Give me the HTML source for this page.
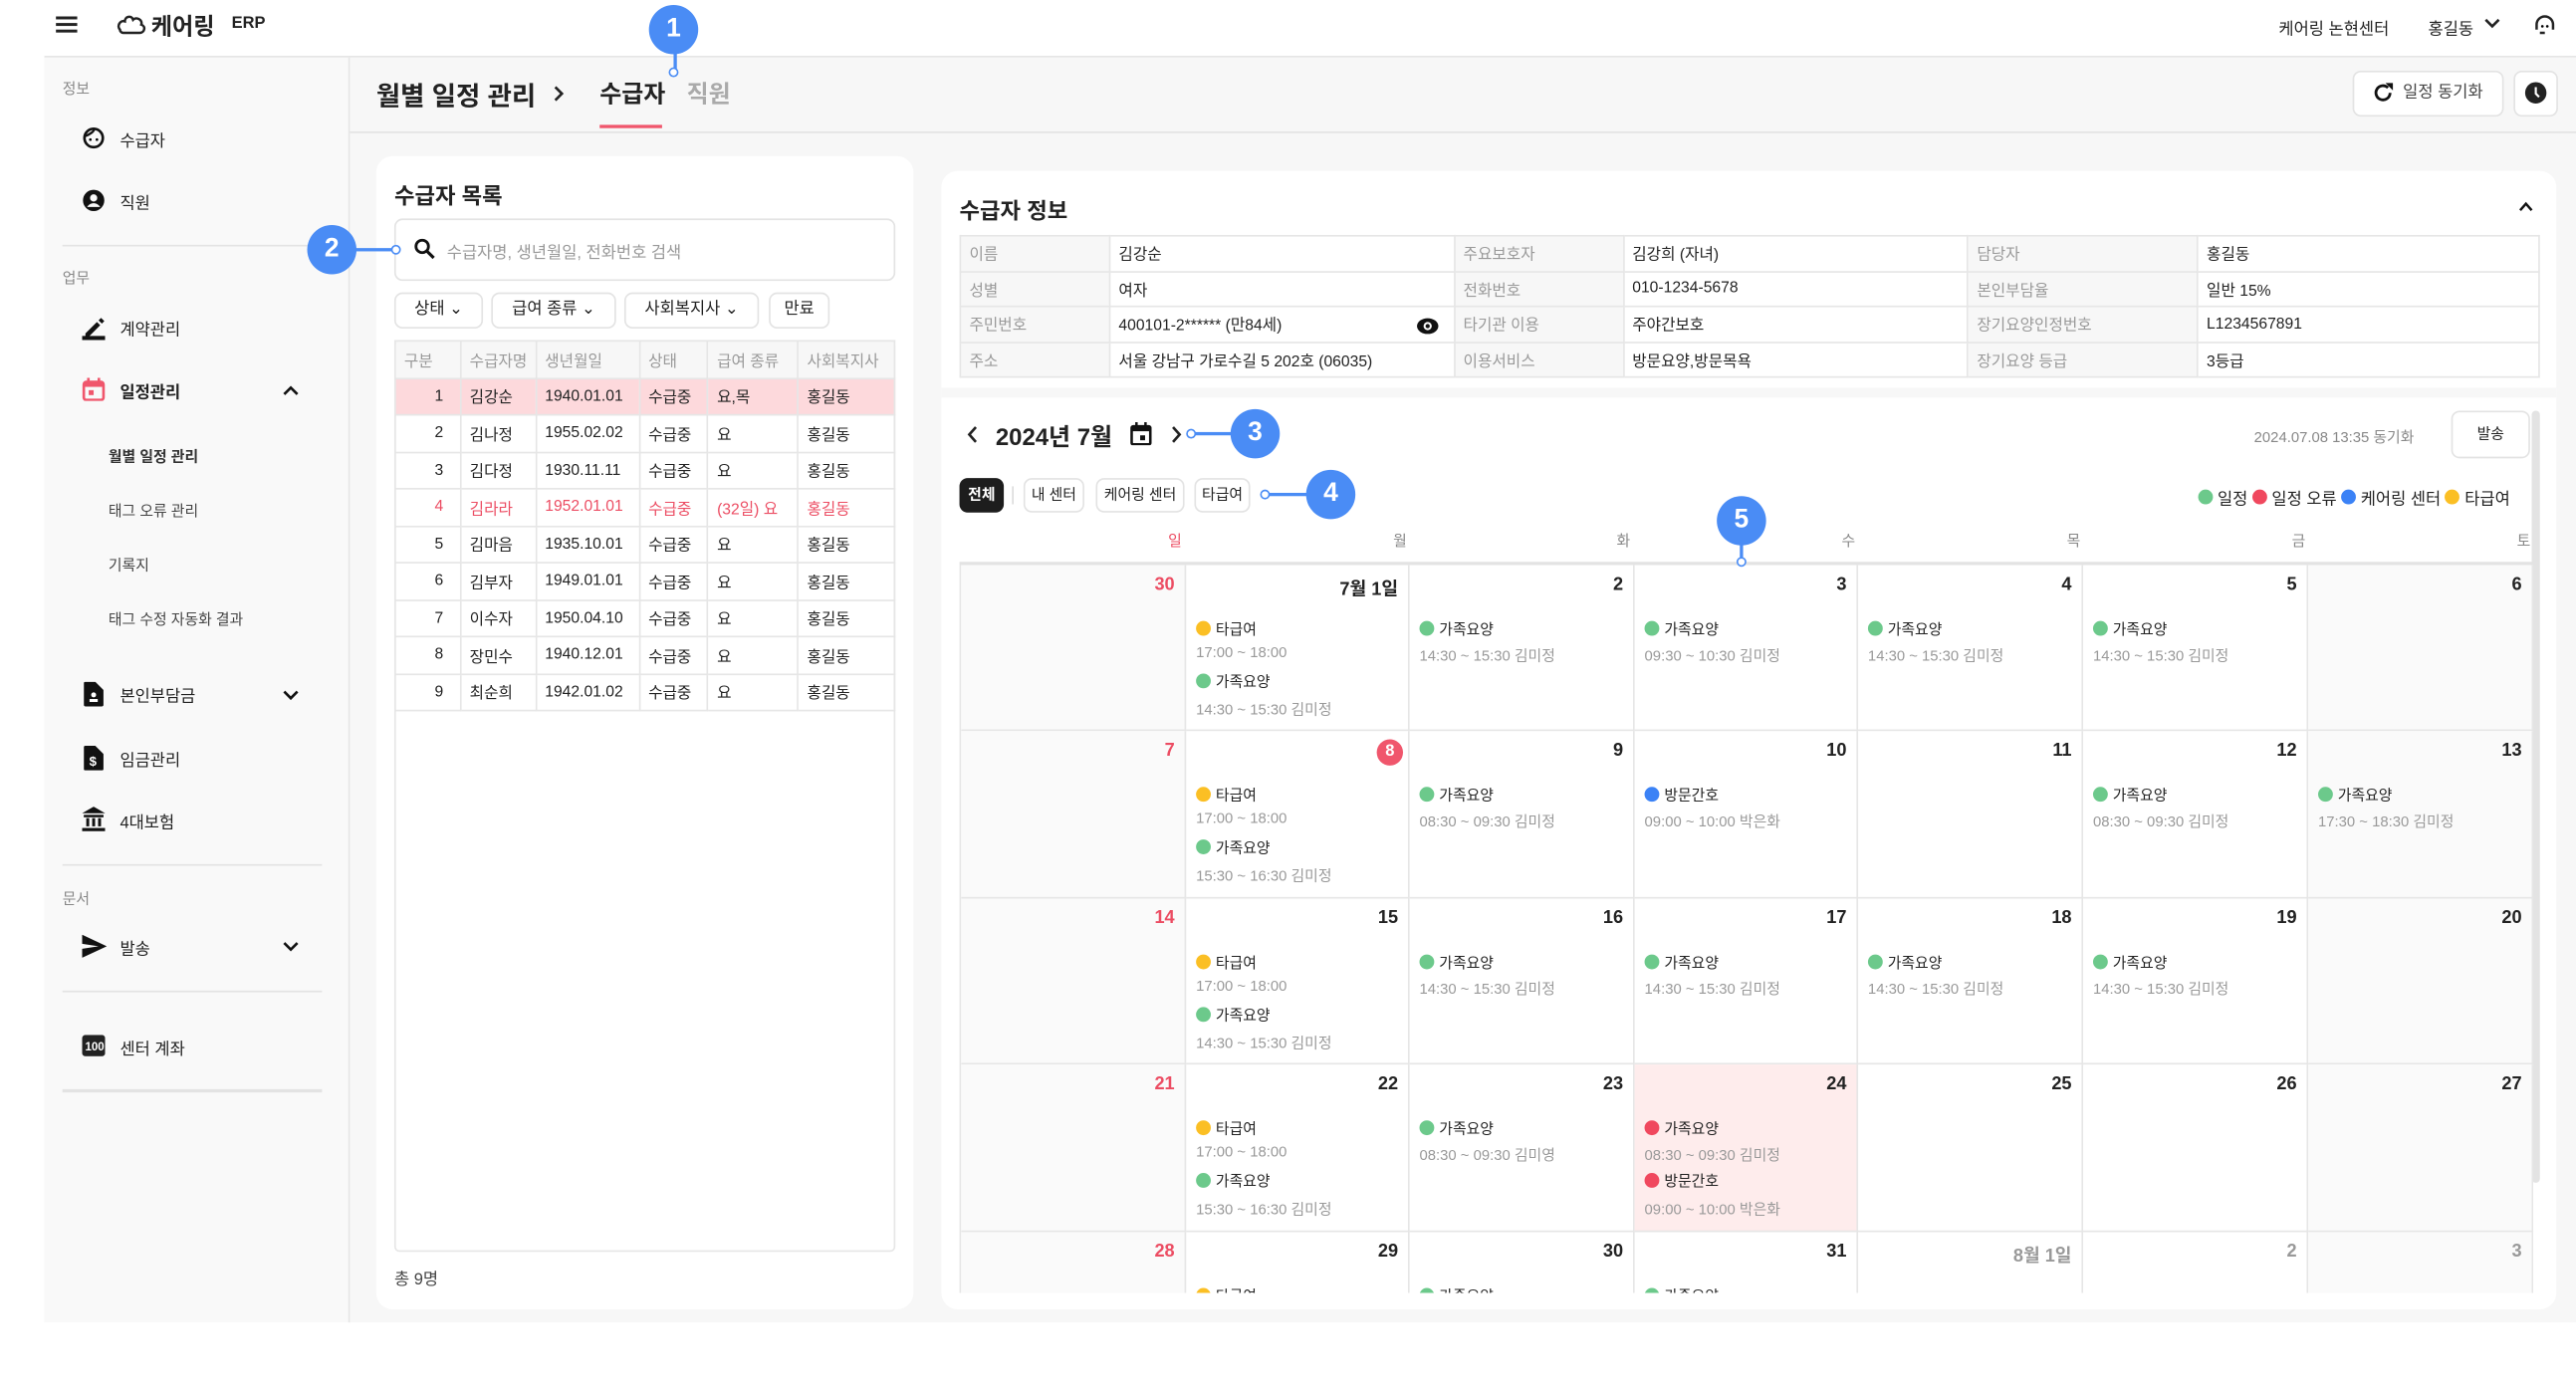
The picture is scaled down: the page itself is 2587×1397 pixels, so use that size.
<!DOCTYPE html>
<html><head><meta charset="utf-8">
<style>
html,body{margin:0;padding:0;width:2587px;height:1397px;overflow:hidden;background:#fff}
#w{position:absolute;left:0;top:0;width:1568px;height:847px;transform:scale(1.6499);transform-origin:0 0;font-family:"Liberation Sans","Noto Sans CJK KR",sans-serif;color:#222}
.a{position:absolute;white-space:nowrap}
.g{color:#888}
.s9{font-size:9px}.s10{font-size:10px}.s11{font-size:11px}
.b{font-weight:bold}
.badge{position:absolute;width:30px;height:30px;border-radius:50%;background:#4a8cf5;color:#fff;font-weight:bold;font-size:16px;text-align:center;line-height:30px;font-family:"Liberation Sans",sans-serif}
.ring{position:absolute;width:4px;height:4px;border:1.5px solid #4a8cf5;border-radius:50%;background:#fff}
.ln{position:absolute;background:#4a8cf5}
.btn{position:absolute;border:1px solid #e3e3e3;border-radius:5px;background:#fff;font-size:10px;text-align:center;box-sizing:border-box}
table{border-collapse:collapse;position:absolute}
td{border:1px solid #e6e6e6;padding:0 0 0 5px;font-size:9.5px;height:21.5px;box-sizing:border-box}
#lt td{height:22.5px}
.cell{position:absolute;border-right:1px solid #e6e6e6;border-bottom:1px solid #e6e6e6;box-sizing:border-box;overflow:hidden}
.dn{position:absolute;right:6px;top:6px;font-size:11px;font-weight:bold}
.ev{position:absolute;left:6px;font-size:9px;white-space:nowrap}
.ev i{display:inline-block;width:9px;height:9px;border-radius:50%;margin-right:3px;vertical-align:-1px}
.tm{position:absolute;left:6px;font-size:9px;color:#999;white-space:nowrap}
.G{background:#6cc98b}.Y{background:#fbbf24}.B{background:#3b82f6}.R{background:#f0485e}
.red{color:#ec4d63}
</style></head><body><div id="w">
<div class="a" style="left:27px;top:0;width:1541px;height:34px;border-bottom:1px solid #e3e3e3;background:#fff"></div>
<svg class="a" style="left:34px;top:9px" width="14" height="12"><rect y="1" width="13" height="1.8" fill="#222"/><rect y="5" width="13" height="1.8" fill="#222"/><rect y="9" width="13" height="1.8" fill="#222"/></svg>
<svg class="a" style="left:70px;top:7px" width="20" height="16" viewBox="0 0 20 16"><path d="M3 11c-2-2 0-6 3-5 0-3 4-4 5-1 2-2 6 0 5 3 3 1 2 5-1 5H5c-1 0-2-1-2-2z" fill="none" stroke="#222" stroke-width="1.5"/></svg>
<div class="a b" style="left:92px;top:6px;font-size:14px">케어링</div>
<div class="a b" style="left:141px;top:9px;font-size:10px">ERP</div>
<div class="a s10" style="left:1387px;top:9px">케어링 논현센터</div>
<div class="a s10" style="left:1478px;top:9px">홍길동</div>
<svg class="a" style="left:1512px;top:10px" width="10" height="8"><path d="M1 2l4 4 4-4" fill="none" stroke="#222" stroke-width="1.6"/></svg>
<svg class="a" style="left:1542px;top:8px" width="14" height="14" viewBox="0 0 14 14"><path d="M2 10V7a5 5 0 0110 0v3M4 12h3" fill="none" stroke="#222" stroke-width="1.5"/><circle cx="5.5" cy="8" r=".8"/><circle cx="8.5" cy="8" r=".8"/></svg>
<div class="a" style="left:27px;top:35px;width:185px;height:770px;background:#f9f9f9;border-right:1px solid #e6e6e6"></div>
<div class="a s9 g" style="left:38px;top:47px">정보</div>
<svg class="a" style="left:50px;top:77px" width="14" height="14"><circle cx="7" cy="7" r="5.6" fill="none" stroke="#111" stroke-width="1.6"/><path d="M1.5 6c3-1 6-3 6-5" stroke="#111" stroke-width="1.4" fill="none"/><circle cx="5" cy="8" r=".8"/><circle cx="9" cy="8" r=".8"/></svg>
<div class="a s10" style="left:73px;top:77px">수급자</div>
<svg class="a" style="left:50px;top:115px" width="14" height="14"><circle cx="7" cy="7" r="6.5" fill="#111"/><circle cx="7" cy="5.5" r="2.2" fill="#f9f9f9"/><path d="M3 11c2-3 6-3 8 0" fill="#f9f9f9"/></svg>
<div class="a s10" style="left:73px;top:115px">직원</div>
<div class="a" style="left:38px;top:149px;width:158px;height:1px;background:#e3e3e3"></div>
<div class="a s9 g" style="left:38px;top:162px">업무</div>
<svg class="a" style="left:50px;top:192px" width="14" height="15"><path d="M2 11l7-7 2 2-7 7H2z" fill="#111"/><path d="M10 3l1.5-1.5 2 2L12 5z" fill="#111"/><rect y="12.5" width="14" height="2.5" fill="#111"/></svg>
<div class="a s10" style="left:73px;top:192px">계약관리</div>
<svg class="a" style="left:50px;top:230px" width="14" height="14"><rect x="1" y="2.5" width="12" height="11" rx="1.5" fill="none" stroke="#f0566c" stroke-width="1.6"/><rect x="1" y="2.5" width="12" height="3" fill="#f0566c"/><rect x="3" y="0" width="1.6" height="3" fill="#f0566c"/><rect x="9.4" y="0" width="1.6" height="3" fill="#f0566c"/><rect x="4" y="7.5" width="3" height="3" fill="#f0566c"/></svg>
<div class="a s10 b" style="left:73px;top:230px">일정관리</div>
<svg class="a" style="left:172px;top:234px" width="10" height="7"><path d="M1 6l4-4 4 4" fill="none" stroke="#111" stroke-width="1.6"/></svg>
<div class="a s9 b" style="left:66px;top:271px;color:#333">월별 일정 관리</div>
<div class="a s9" style="left:66px;top:304px;color:#444">태그 오류 관리</div>
<div class="a s9" style="left:66px;top:337px;color:#444">기록지</div>
<div class="a s9" style="left:66px;top:370px;color:#444">태그 수정 자동화 결과</div>
<svg class="a" style="left:51px;top:415px" width="12" height="15"><path d="M0 1a1 1 0 011-1h6l5 5v9a1 1 0 01-1 1H1a1 1 0 01-1-1z" fill="#111"/><circle cx="6" cy="8" r="1.5" fill="#fff"/><rect x="3.5" y="10.5" width="5" height="1.8" fill="#fff"/></svg>
<div class="a s10" style="left:73px;top:415px">본인부담금</div>
<svg class="a" style="left:172px;top:420px" width="10" height="7"><path d="M1 1l4 4 4-4" fill="none" stroke="#111" stroke-width="1.6"/></svg>
<svg class="a" style="left:51px;top:454px" width="12" height="15"><path d="M0 1a1 1 0 011-1h6l5 5v9a1 1 0 01-1 1H1a1 1 0 01-1-1z" fill="#111"/><text x="3.3" y="12" font-size="8" fill="#fff" font-family="Liberation Sans" font-weight="bold">$</text></svg>
<div class="a s10" style="left:73px;top:454px">임금관리</div>
<svg class="a" style="left:50px;top:491px" width="14" height="15"><path d="M7 0l7 4H0z" fill="#111"/><rect x="1" y="5" width="12" height="1.5" fill="#111"/><rect x="2.5" y="7" width="1.8" height="5" fill="#111"/><rect x="6.1" y="7" width="1.8" height="5" fill="#111"/><rect x="9.7" y="7" width="1.8" height="5" fill="#111"/><rect y="13" width="14" height="2" fill="#111"/></svg>
<div class="a s10" style="left:73px;top:492px">4대보험</div>
<div class="a" style="left:38px;top:526px;width:158px;height:1px;background:#e3e3e3"></div>
<div class="a s9 g" style="left:38px;top:540px">문서</div>
<svg class="a" style="left:50px;top:569px" width="15" height="14"><path d="M0 0l15 7-15 7 0-5.5 10-1.5-10-1.5z" fill="#111"/></svg>
<div class="a s10" style="left:73px;top:569px">발송</div>
<svg class="a" style="left:172px;top:573px" width="10" height="7"><path d="M1 1l4 4 4-4" fill="none" stroke="#111" stroke-width="1.6"/></svg>
<div class="a" style="left:38px;top:603px;width:158px;height:1px;background:#e3e3e3"></div>
<svg class="a" style="left:50px;top:630px" width="14" height="13"><rect width="14" height="13" rx="2" fill="#222"/><text x="1.8" y="9.5" font-size="7" fill="#fff" font-family="Liberation Sans" font-weight="bold">100</text></svg>
<div class="a s10" style="left:73px;top:630px">센터 계좌</div>
<div class="a" style="left:38px;top:663px;width:158px;height:2px;background:#e3e3e3"></div>
<div class="a" style="left:213px;top:35px;width:1355px;height:770px;background:#f7f7f7"></div>
<div class="a" style="left:213px;top:80px;width:1355px;height:1px;background:#e3e3e3"></div>
<div class="a b" style="left:229px;top:45px;font-size:16px">월별 일정 관리</div>
<svg class="a" style="left:336px;top:52px" width="8" height="10"><path d="M2 1l4 4-4 4" fill="none" stroke="#222" stroke-width="1.6"/></svg>
<div class="a b" style="left:365px;top:46px;font-size:14.5px">수급자</div>
<div class="a" style="left:365px;top:76px;width:38px;height:1.5px;background:#f0566c"></div>
<div class="a b" style="left:418px;top:46px;font-size:14.5px;color:#aaa">직원</div>
<div class="btn" style="left:1432px;top:43px;width:92px;height:28px;line-height:26px;color:#444;padding-left:18px">일정 동기화</div>
<svg class="a" style="left:1444px;top:50px" width="13" height="13"><path d="M10.8 6.5A4.3 4.3 0 1 1 9.5 3.4" fill="none" stroke="#111" stroke-width="1.7"/><path d="M8 0.5h4.5V5z" fill="#111"/></svg>
<div class="btn" style="left:1530px;top:43px;width:27px;height:28px"></div>
<svg class="a" style="left:1536px;top:49px" width="15" height="15"><circle cx="7.5" cy="7.5" r="6.5" fill="#222"/><path d="M7.5 4v4l2 2" stroke="#fff" stroke-width="1.3" fill="none"/></svg>
<div class="a" style="left:229px;top:95px;width:327px;height:702px;background:#fff;border-radius:10px"></div>
<div class="a b" style="left:240px;top:108px;font-size:13.5px">수급자 목록</div>
<div class="a" style="left:240px;top:133px;width:305px;height:38px;border:1px solid #e3e3e3;border-radius:5px;box-sizing:border-box"></div>
<svg class="a" style="left:252px;top:145px" width="13" height="13"><circle cx="5" cy="5" r="3.8" fill="none" stroke="#111" stroke-width="1.7"/><path d="M8 8l4 4" stroke="#111" stroke-width="1.9"/></svg>
<div class="a s10" style="left:272px;top:145px;color:#999">수급자명, 생년월일, 전화번호 검색</div>
<div class="btn" style="left:240px;top:178px;width:54px;height:22px;line-height:20px">상태 ⌄</div>
<div class="btn" style="left:299px;top:178px;width:76px;height:22px;line-height:20px">급여 종류 ⌄</div>
<div class="btn" style="left:380px;top:178px;width:82px;height:22px;line-height:20px">사회복지사 ⌄</div>
<div class="btn" style="left:468px;top:178px;width:37px;height:22px;line-height:20px">만료</div>
<div class="a" style="left:240px;top:207px;width:305px;height:555px;border:1px solid #e6e6e6;box-sizing:border-box;border-radius:3px"></div>
<table id="lt" style="left:240px;top:207px;width:305px">
<colgroup><col style="width:40px"><col style="width:46px"><col style="width:63px"><col style="width:42px"><col style="width:55px"><col style="width:59px"></colgroup>
<tr style="background:#f7f7f7;color:#999"><td style="height:21px">구분</td><td>수급자명</td><td>생년월일</td><td>상태</td><td>급여 종류</td><td>사회복지사</td></tr>
<tr style="background:#fdd9dc"><td style="text-align:right;padding-right:10px">1</td><td>김강순</td><td>1940.01.01</td><td>수급중</td><td>요,목</td><td>홍길동</td></tr>
<tr><td style="text-align:right;padding-right:10px">2</td><td>김나정</td><td>1955.02.02</td><td>수급중</td><td>요</td><td>홍길동</td></tr>
<tr><td style="text-align:right;padding-right:10px">3</td><td>김다정</td><td>1930.11.11</td><td>수급중</td><td>요</td><td>홍길동</td></tr>
<tr class="red"><td style="text-align:right;padding-right:10px">4</td><td>김라라</td><td>1952.01.01</td><td>수급중</td><td>(32일) 요</td><td>홍길동</td></tr>
<tr><td style="text-align:right;padding-right:10px">5</td><td>김마음</td><td>1935.10.01</td><td>수급중</td><td>요</td><td>홍길동</td></tr>
<tr><td style="text-align:right;padding-right:10px">6</td><td>김부자</td><td>1949.01.01</td><td>수급중</td><td>요</td><td>홍길동</td></tr>
<tr><td style="text-align:right;padding-right:10px">7</td><td>이수자</td><td>1950.04.10</td><td>수급중</td><td>요</td><td>홍길동</td></tr>
<tr><td style="text-align:right;padding-right:10px">8</td><td>장민수</td><td>1940.12.01</td><td>수급중</td><td>요</td><td>홍길동</td></tr>
<tr><td style="text-align:right;padding-right:10px">9</td><td>최순희</td><td>1942.01.02</td><td>수급중</td><td>요</td><td>홍길동</td></tr>
</table>
<div class="a s10" style="left:240px;top:770px;color:#444">총 9명</div>
<div class="a" style="left:573px;top:104px;width:983px;height:693px;background:#fff;border-radius:10px"></div>
<div class="a b" style="left:584px;top:117px;font-size:13.5px">수급자 정보</div>
<svg class="a" style="left:1533px;top:122px" width="9" height="7"><path d="M1 6l3.5-4 3.5 4" fill="none" stroke="#111" stroke-width="1.5"/></svg>
<table style="left:584px;top:143px;width:962px">
<colgroup><col style="width:91px"><col style="width:210px"><col style="width:103px"><col style="width:210px"><col style="width:140px"><col style="width:208px"></colgroup>
<tr><td style="background:#f7f7f7;color:#999">이름</td><td>김강순</td><td style="background:#f7f7f7;color:#999">주요보호자</td><td>김강희 (자녀)</td><td style="background:#f7f7f7;color:#999">담당자</td><td>홍길동</td></tr>
<tr><td style="background:#f7f7f7;color:#999">성별</td><td>여자</td><td style="background:#f7f7f7;color:#999">전화번호</td><td>010-1234-5678</td><td style="background:#f7f7f7;color:#999">본인부담율</td><td>일반 15%</td></tr>
<tr><td style="background:#f7f7f7;color:#999">주민번호</td><td>400101-2****** (만84세)</td><td style="background:#f7f7f7;color:#999">타기관 이용</td><td>주야간보호</td><td style="background:#f7f7f7;color:#999">장기요양인정번호</td><td>L1234567891</td></tr>
<tr><td style="background:#f7f7f7;color:#999">주소</td><td>서울 강남구 가로수길 5 202호 (06035)</td><td style="background:#f7f7f7;color:#999">이용서비스</td><td>방문요양,방문목욕</td><td style="background:#f7f7f7;color:#999">장기요양 등급</td><td>3등급</td></tr>
</table>
<svg class="a" style="left:862px;top:193px" width="14" height="11"><ellipse cx="7" cy="5.5" rx="6.5" ry="4.8" fill="#111"/><circle cx="7" cy="5.5" r="2.5" fill="#fff"/><circle cx="7" cy="5.5" r="1.3" fill="#111"/></svg>
<div class="a" style="left:573px;top:236px;width:983px;height:6px;background:#f7f7f7"></div>
<div class="a" style="left:1541px;top:250px;width:5px;height:470px;background:#e3e3e3;border-radius:3px"></div>
<svg class="a" style="left:588px;top:259px" width="8" height="11"><path d="M6 1L2 5.5 6 10" fill="none" stroke="#222" stroke-width="1.6"/></svg>
<div class="a b" style="left:606px;top:255px;font-size:14.5px">2024년 7월</div>
<svg class="a" style="left:688px;top:257px" width="13" height="14"><rect x=".8" y="2.5" width="11.4" height="11" rx="1" fill="none" stroke="#111" stroke-width="1.6"/><rect x=".8" y="2.5" width="11.4" height="3" fill="#111"/><rect x="3" y="0" width="1.5" height="3" fill="#111"/><rect x="8.5" y="0" width="1.5" height="3" fill="#111"/><rect x="6" y="8" width="3" height="3" fill="#111"/></svg>
<svg class="a" style="left:712px;top:259px" width="8" height="11"><path d="M2 1l4 4.5L2 10" fill="none" stroke="#222" stroke-width="1.6"/></svg>
<div class="a s9 g" style="left:1372px;top:259px">2024.07.08 13:35 동기화</div>
<div class="btn" style="left:1492px;top:250px;width:48px;height:29px;line-height:27px;font-size:9px">발송</div>
<div class="btn" style="left:584px;top:291px;width:27px;height:21px;line-height:21px;background:#1d1d1d;color:#fff;border:none;font-size:9px;font-weight:bold">전체</div>
<div class="a" style="left:616px;top:296px;width:1px;height:11px;background:#ddd"></div>
<div class="btn" style="left:623px;top:291px;width:37px;height:21px;line-height:19px;font-size:9px">내 센터</div>
<div class="btn" style="left:667px;top:291px;width:54px;height:21px;line-height:19px;font-size:9px">케어링 센터</div>
<div class="btn" style="left:727px;top:291px;width:34px;height:21px;line-height:19px;font-size:9px">타급여</div>
<div class="a s10" style="left:1338px;top:295px"><span style="display:inline-block;width:9px;height:9px;border-radius:50%;background:#6cc98b"></span> 일정 <span style="display:inline-block;width:9px;height:9px;border-radius:50%;background:#f0485e"></span> 일정 오류 <span style="display:inline-block;width:9px;height:9px;border-radius:50%;background:#3b82f6"></span> 케어링 센터 <span style="display:inline-block;width:9px;height:9px;border-radius:50%;background:#fbbf24"></span> 타급여</div>
<div class="a s9 red" style="left:711px;top:322px">일</div>
<div class="a s9 g" style="left:848px;top:322px">월</div>
<div class="a s9 g" style="left:984px;top:322px">화</div>
<div class="a s9 g" style="left:1121px;top:322px">수</div>
<div class="a s9 g" style="left:1258px;top:322px">목</div>
<div class="a s9 g" style="left:1395px;top:322px">금</div>
<div class="a s9 g" style="left:1532px;top:322px">토</div>
<div class="a" style="left:584px;top:342px;width:957px;height:2px;background:#e3e3e3"></div>
<div class="a" style="left:584px;top:344px;width:957px;height:443px;overflow:hidden;border-left:1px solid #e6e6e6">
<div class="cell" style="left:0;top:0;width:137px;height:101px;background:#fafafa"><div class="dn red">30</div></div>
<div class="cell" style="left:137px;top:0;width:136px;height:101px"><div class="dn">7월 1일</div><div class="ev" style="top:32px"><i class="Y"></i>타급여</div><div class="tm" style="top:48px">17:00 ~ 18:00</div><div class="ev" style="top:64px"><i class="G"></i>가족요양</div><div class="tm" style="top:81px">14:30 ~ 15:30 김미정</div></div>
<div class="cell" style="left:273px;top:0;width:137px;height:101px"><div class="dn">2</div><div class="ev" style="top:32px"><i class="G"></i>가족요양</div><div class="tm" style="top:48px">14:30 ~ 15:30 김미정</div></div>
<div class="cell" style="left:410px;top:0;width:136px;height:101px"><div class="dn">3</div><div class="ev" style="top:32px"><i class="G"></i>가족요양</div><div class="tm" style="top:48px">09:30 ~ 10:30 김미정</div></div>
<div class="cell" style="left:546px;top:0;width:137px;height:101px"><div class="dn">4</div><div class="ev" style="top:32px"><i class="G"></i>가족요양</div><div class="tm" style="top:48px">14:30 ~ 15:30 김미정</div></div>
<div class="cell" style="left:683px;top:0;width:137px;height:101px"><div class="dn">5</div><div class="ev" style="top:32px"><i class="G"></i>가족요양</div><div class="tm" style="top:48px">14:30 ~ 15:30 김미정</div></div>
<div class="cell" style="left:820px;top:0;width:137px;height:101px;background:#fafafa"><div class="dn">6</div></div>
<div class="cell" style="left:0;top:101px;width:137px;height:102px;background:#fafafa"><div class="dn red">7</div></div>
<div class="cell" style="left:137px;top:101px;width:136px;height:102px"><div class="dn" style="top:5px;right:3px;width:16px;height:16px;border-radius:50%;background:#f0566c;color:#fff;text-align:center;line-height:16px;font-size:10px">8</div><div class="ev" style="top:32px"><i class="Y"></i>타급여</div><div class="tm" style="top:48px">17:00 ~ 18:00</div><div class="ev" style="top:64px"><i class="G"></i>가족요양</div><div class="tm" style="top:81px">15:30 ~ 16:30 김미정</div></div>
<div class="cell" style="left:273px;top:101px;width:137px;height:102px"><div class="dn">9</div><div class="ev" style="top:32px"><i class="G"></i>가족요양</div><div class="tm" style="top:48px">08:30 ~ 09:30 김미정</div></div>
<div class="cell" style="left:410px;top:101px;width:136px;height:102px"><div class="dn">10</div><div class="ev" style="top:32px"><i class="B"></i>방문간호</div><div class="tm" style="top:48px">09:00 ~ 10:00 박은화</div></div>
<div class="cell" style="left:546px;top:101px;width:137px;height:102px"><div class="dn">11</div></div>
<div class="cell" style="left:683px;top:101px;width:137px;height:102px"><div class="dn">12</div><div class="ev" style="top:32px"><i class="G"></i>가족요양</div><div class="tm" style="top:48px">08:30 ~ 09:30 김미정</div></div>
<div class="cell" style="left:820px;top:101px;width:137px;height:102px;background:#fafafa"><div class="dn">13</div><div class="ev" style="top:32px"><i class="G"></i>가족요양</div><div class="tm" style="top:48px">17:30 ~ 18:30 김미정</div></div>
<div class="cell" style="left:0;top:203px;width:137px;height:101px;background:#fafafa"><div class="dn red">14</div></div>
<div class="cell" style="left:137px;top:203px;width:136px;height:101px"><div class="dn">15</div><div class="ev" style="top:32px"><i class="Y"></i>타급여</div><div class="tm" style="top:48px">17:00 ~ 18:00</div><div class="ev" style="top:64px"><i class="G"></i>가족요양</div><div class="tm" style="top:81px">14:30 ~ 15:30 김미정</div></div>
<div class="cell" style="left:273px;top:203px;width:137px;height:101px"><div class="dn">16</div><div class="ev" style="top:32px"><i class="G"></i>가족요양</div><div class="tm" style="top:48px">14:30 ~ 15:30 김미정</div></div>
<div class="cell" style="left:410px;top:203px;width:136px;height:101px"><div class="dn">17</div><div class="ev" style="top:32px"><i class="G"></i>가족요양</div><div class="tm" style="top:48px">14:30 ~ 15:30 김미정</div></div>
<div class="cell" style="left:546px;top:203px;width:137px;height:101px"><div class="dn">18</div><div class="ev" style="top:32px"><i class="G"></i>가족요양</div><div class="tm" style="top:48px">14:30 ~ 15:30 김미정</div></div>
<div class="cell" style="left:683px;top:203px;width:137px;height:101px"><div class="dn">19</div><div class="ev" style="top:32px"><i class="G"></i>가족요양</div><div class="tm" style="top:48px">14:30 ~ 15:30 김미정</div></div>
<div class="cell" style="left:820px;top:203px;width:137px;height:101px;background:#fafafa"><div class="dn">20</div></div>
<div class="cell" style="left:0;top:304px;width:137px;height:102px;background:#fafafa"><div class="dn red">21</div></div>
<div class="cell" style="left:137px;top:304px;width:136px;height:102px"><div class="dn">22</div><div class="ev" style="top:32px"><i class="Y"></i>타급여</div><div class="tm" style="top:48px">17:00 ~ 18:00</div><div class="ev" style="top:64px"><i class="G"></i>가족요양</div><div class="tm" style="top:81px">15:30 ~ 16:30 김미정</div></div>
<div class="cell" style="left:273px;top:304px;width:137px;height:102px"><div class="dn">23</div><div class="ev" style="top:32px"><i class="G"></i>가족요양</div><div class="tm" style="top:48px">08:30 ~ 09:30 김미영</div></div>
<div class="cell" style="left:410px;top:304px;width:136px;height:102px;background:#feecec"><div class="dn">24</div><div class="ev" style="top:32px"><i class="R"></i>가족요양</div><div class="tm" style="top:48px">08:30 ~ 09:30 김미정</div><div class="ev" style="top:64px"><i class="R"></i>방문간호</div><div class="tm" style="top:81px">09:00 ~ 10:00 박은화</div></div>
<div class="cell" style="left:546px;top:304px;width:137px;height:102px"><div class="dn">25</div></div>
<div class="cell" style="left:683px;top:304px;width:137px;height:102px"><div class="dn">26</div></div>
<div class="cell" style="left:820px;top:304px;width:137px;height:102px;background:#fafafa"><div class="dn">27</div></div>
<div class="cell" style="left:0;top:406px;width:137px;height:101px;background:#fafafa"><div class="dn red">28</div></div>
<div class="cell" style="left:137px;top:406px;width:136px;height:101px"><div class="dn">29</div><div class="ev" style="top:32px"><i class="Y"></i>타급여</div></div>
<div class="cell" style="left:273px;top:406px;width:137px;height:101px"><div class="dn">30</div><div class="ev" style="top:32px"><i class="G"></i>가족요양</div></div>
<div class="cell" style="left:410px;top:406px;width:136px;height:101px"><div class="dn">31</div><div class="ev" style="top:32px"><i class="G"></i>가족요양</div></div>
<div class="cell" style="left:546px;top:406px;width:137px;height:101px"><div class="dn" style="color:#999">8월 1일</div></div>
<div class="cell" style="left:683px;top:406px;width:137px;height:101px"><div class="dn" style="color:#999">2</div></div>
<div class="cell" style="left:820px;top:406px;width:137px;height:101px;background:#fafafa"><div class="dn" style="color:#999">3</div></div>
</div>
<div class="ln" style="left:409.5px;top:30px;width:2px;height:13px"></div><div class="ring" style="left:407px;top:41px"></div><div class="badge" style="left:395px;top:3px">1</div>
<div class="ln" style="left:215px;top:151px;width:24px;height:2px"></div><div class="ring" style="left:238px;top:149px"></div><div class="badge" style="left:187px;top:137px">2</div>
<div class="ln" style="left:727px;top:263px;width:24px;height:2px"></div><div class="ring" style="left:722px;top:261px"></div><div class="badge" style="left:749px;top:249px">3</div>
<div class="ln" style="left:772px;top:300px;width:25px;height:2px"></div><div class="ring" style="left:767px;top:298px"></div><div class="badge" style="left:795px;top:286px">4</div>
<div class="ln" style="left:1059px;top:328px;width:2px;height:13px"></div><div class="ring" style="left:1057px;top:339px"></div><div class="badge" style="left:1045px;top:302px">5</div>
</div></body></html>
